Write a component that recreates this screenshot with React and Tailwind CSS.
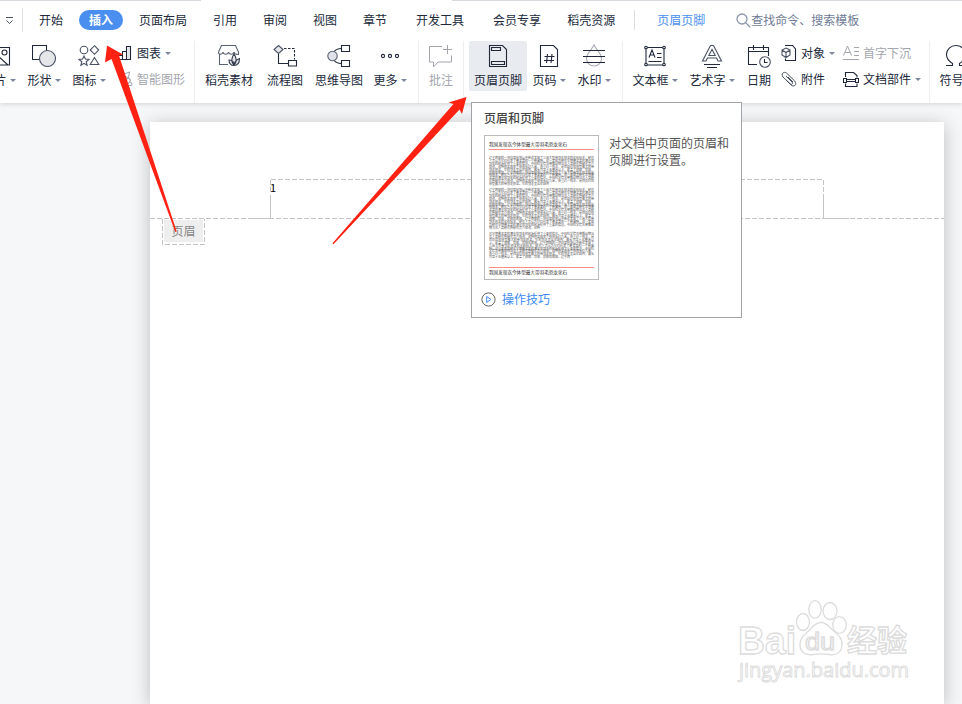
import React from 'react';

const article =
  '辽宁西部的一块白垩纪地层中新近发现了三具大型带羽毛恐龙的化石标本，研究人员认为它们代表了暴龙类的一个新属种，这一发现为研究早期暴龙类的演化和羽毛的起源提供了重要的信息。中国科学院古脊椎动物与古人类研究所研究员介绍说，这种恐龙成年个体体长约九米，体重约一吨半，是目前已知体型最大的带羽毛恐龙。它的羽毛呈丝状结构，最长可达十五厘米以上，覆盖了颈部、背部、前肢和尾部。';

const longText = article + article + article;
const p1 = longText.slice(0, 335);
const p2 = longText.slice(0, 472);
const p3 = longText.slice(60, 365);

function Icon({ w = 24, h = 24, children }) {
  return (
    <svg width={w} height={h} viewBox={`0 0 ${w} ${h}`} fill="none" stroke="currentColor" strokeWidth="1.1" className="shrink-0">
      {children}
    </svg>
  );
}

function Arrow() {
  return <span className="h-0 w-0 border-x-[3px] border-t-[3px] border-x-transparent border-t-[#7d87a0]" />;
}

function Divider({ className }) {
  return <div className={`h-[62px] w-px shrink-0 bg-[#eeeff1] ${className}`} />;
}

function BigButton({ label, arrow, className, children }) {
  return (
    <div className={`flex h-[50px] shrink-0 flex-col items-center pt-[3px] ${className}`}>
      {children}
      <div className="mt-[3px] flex h-[18px] items-center gap-[3px]">
        <span>{label}</span>
        {arrow && <Arrow />}
      </div>
    </div>
  );
}

function SmallButton({ label, arrow, className = '', children }) {
  return (
    <div className={`flex h-[18px] items-center gap-1 ${className}`}>
      {children}
      <span>{label}</span>
      {arrow && <Arrow />}
    </div>
  );
}

function Tabs() {
  return (
    <div className="flex h-10 items-center whitespace-nowrap">
      <svg width="9" height="9" viewBox="0 0 9 9" fill="none" stroke="#4a5265" className="ml-[5px] shrink-0">
        <path d="M1 1.500h7M1.500 4.500l3 3 3-3" />
      </svg>
      <div className="ml-2 h-6 w-px bg-[#dcdfe6]" />
      <span className="ml-4">开始</span>
      <span className="ml-4 flex h-5 w-11 items-center justify-center rounded-full bg-[#4a8ff0] font-bold text-white">插入</span>
      <span className="ml-4">页面布局</span>
      <span className="ml-[26px]">引用</span>
      <span className="ml-[26px]">审阅</span>
      <span className="ml-[26px]">视图</span>
      <span className="ml-[26px]">章节</span>
      <span className="ml-[29px]">开发工具</span>
      <span className="ml-[29px]">会员专享</span>
      <span className="ml-[26px]">稻壳资源</span>
      <div className="ml-[19px] h-5 w-px bg-[#dcdfe6]" />
      <span className="ml-[22px] text-[#4a8ff0]">页眉页脚</span>
      <svg width="15" height="15" viewBox="0 0 15 15" fill="none" stroke="#8d97ad" strokeWidth="1.300" className="ml-[31px] shrink-0">
        <circle cx="6" cy="6" r="5" />
        <path d="M9.600 9.600l4.600 4.600" />
      </svg>
      <span className="text-[#6f7b95]">查找命令、搜索模板</span>
    </div>
  );
}

function Ribbon() {
  return (
    <div className="flex h-[63px] items-start whitespace-nowrap pt-px">
      <BigButton label="图片" arrow className="-ml-[17px] w-8">
        <Icon>
          <path d="M2.500 3.500h20v17.500h-20M8 13l3-1 10 9" />
          <circle cx="17.500" cy="8.500" r="2.500" />
        </Icon>
      </BigButton>
      <BigButton label="形状" arrow className="ml-[13px] w-8">
        <Icon>
          <path d="M.5 1.500h14v14H.5z" />
          <circle cx="15.500" cy="14.500" r="8" fill="#e4e6ea" stroke="#4a5265" />
        </Icon>
      </BigButton>
      <BigButton label="图标" arrow className="ml-[13px] w-8">
        <Icon>
          <g stroke="#4a5265">
            <circle cx="7" cy="6" r="3.800" />
            <path d="M17.500 1.700L21.700 6l-4.200 4.300L13.200 6zM17.500 13.500l4.300 7h-8.600zM7 12l1.400 3.100 3.600.3-2.800 2.300.9 3.600L7 19.300l-3.100 2 .9-3.600-2.800-2.300 3.600-.3z" />
          </g>
        </Icon>
      </BigButton>
      <div className="ml-[13px] flex w-[67px] shrink-0 flex-col gap-2 pt-[3px]">
        <SmallButton label="图表" arrow>
          <Icon w={15} h={16}>
            <path d="M9.500 2h3v12h-3z" fill="#e4e6ea" stroke="none" />
            <path d="M.5 10.500h4v4h-4zM4.500 6.500h4v8h-4zM8.500 1.500h4v13h-4z" />
          </Icon>
        </SmallButton>
        <SmallButton label="智能图形" className="text-[#a3a6ae]">
          <Icon w={15} h={16}>
            <path d="M2 4.500l9.500-3.500-1 5.500zM5 14.500h8.500c1-1.500 0-3-1.500-3.500M10.500 7l2 2-2 3.500H7L5.500 10z" />
          </Icon>
        </SmallButton>
      </div>
      <Divider className="ml-[9px]" />
      <BigButton label="稻壳素材" className="ml-[10px] w-12">
        <Icon>
          <g stroke="#5b6272">
            <path d="M11 20.500H2.500V10M1.500 8l3-6.500h14l3 6.500v3M1.500 8c0 3 4 3 4.500 0 .5 3 5 3 5.500 0 .5 3 5 3 5.500 0 .5 2 2 3 4.500 2" />
            <path d="M17 21c-3-3-3-6.500 0-11 3 4.500 3 8 0 11zM17 21.500c-3 0-5-2-5-5.500 3 0 5 2 5 5.500zM17 21.500c3.500 0 5.500-2 5.500-7-3.500 1.500-5.500 3.500-5.500 7z" fill="#e4e6ea" stroke="#343b4c" />
          </g>
        </Icon>
      </BigButton>
      <BigButton label="流程图" className="ml-[14px] w-9">
        <Icon w={26}>
          <path d="M6.500 1.500l4.500 4-4.500 4-4.500-4z" fill="#e4e6ea" stroke="#4a5265" />
          <path d="M6.500 10v9.500H17M16.500 16.500h8v5.500h-8z" />
          <path d="M12 4.500h10.500v11" strokeDasharray="2.500 1.500" />
        </Icon>
      </BigButton>
      <BigButton label="思维导图" className="ml-3 w-12">
        <Icon>
          <path d="M14.500 1.500h8v6h-8zM14.500 16.500h8v6h-8z" />
          <path d="M14.500 4.500c-4 0-6 1-7.500 3.500M14.500 19.500c-4 0-6-1-7.500-3.500" />
          <circle cx="5.500" cy="12" r="4.700" fill="#dfe2e8" stroke="#5b6272" />
        </Icon>
      </BigButton>
      <BigButton label="更多" arrow className="ml-[11px] w-8">
        <Icon>
          <circle cx="5" cy="12" r="1.600" />
          <circle cx="12" cy="12" r="1.600" />
          <circle cx="19" cy="12" r="1.600" />
        </Icon>
      </BigButton>
      <Divider className="ml-3" />
      <BigButton label="批注" className="ml-[10px] w-6 text-[#a3a6ae]">
        <Icon>
          <path d="M13 2.500H.5v15.500h4V23l4.500-5H22.500v-6.500M18.500 1v9M14 5.500h9" strokeWidth="1" />
        </Icon>
      </BigButton>
      <Divider className="ml-[10px]" />
      <BigButton label="页眉页脚" className="ml-[5px] w-[58px] rounded-xs bg-[#e8ebf0]">
        <Icon>
          <path d="M3.500 1.500h13l4 4V22.500h-17zM5.500 3.500h9v3h-9zM5.500 17.500h13v3h-13z" />
        </Icon>
      </BigButton>
      <BigButton label="页码" arrow className="ml-[6px] w-8">
        <Icon>
          <path d="M3.500 1.500h13l4 4V22.500h-17z" />
          <path d="M10.500 10l-1 9M15 10l-1 9M7.500 12.500h10M7 16.500h10" />
        </Icon>
      </BigButton>
      <BigButton label="水印" arrow className="ml-[13px] w-8">
        <Icon>
          <path d="M12 1c-2 4.500-7.500 8-7.500 13.500a7.500 7.500 0 0015 0C19.500 9 14 5.500 12 1z" stroke="#a9acb4" />
          <path d="M1 6.500h22M1 12.500h22M1 18.500h22" />
        </Icon>
      </BigButton>
      <Divider className="ml-3" />
      <BigButton label="文本框" arrow className="ml-[10px] w-11">
        <Icon>
          <path d="M3 3.500h18v17.500H3zM5.500 17.500h13M14 9.500h4.500M14 13.500h4.500M6 13.500L9 6l3 7.500M7 11h4" />
          <g fill="#fff">
            <circle cx="3" cy="3.500" r="1.300" />
            <circle cx="21" cy="3.500" r="1.300" />
            <circle cx="3" cy="20.500" r="1.300" />
            <circle cx="21" cy="20.500" r="1.300" />
          </g>
        </Icon>
      </BigButton>
      <BigButton label="艺术字" arrow className="ml-[13px] w-11">
        <Icon>
          <path d="M10.500 1.500h3L21.500 17H18l-1.500-3h-9L6 17H2.500zM12 5.500L8.800 11.500h6.400z" stroke="#4a5265" />
          <path d="M4 20.500h16M7 23.500h10" />
        </Icon>
      </BigButton>
      <BigButton label="日期" className="ml-[13px] w-6">
        <Icon>
          <path d="M10 20.500H1.500v-17h20V12M1.500 7.500h20M6.500 1v5M16.500 1v5" />
          <circle cx="18" cy="18" r="5.300" stroke="#4a5265" />
          <path d="M17.500 15v3.500h3" />
        </Icon>
      </BigButton>
      <div className="ml-[10px] flex w-[53px] shrink-0 flex-col gap-2 pt-[3px]">
        <SmallButton label="对象" arrow>
          <Icon w={16} h={16}>
            <path d="M4 .5h7.500l3 3.500v11.500h-10V13.500" />
            <path d="M5 3l4 2v5l-4 2.500L1 10V5zM1 5l4 2.500L9 5M5 7.500v5" stroke="#4a5265" />
          </Icon>
        </SmallButton>
        <SmallButton label="附件">
          <Icon w={16} h={16}>
            <path d="M5 5l6 6c1.500 1.500-.3 3.200-1.800 1.700L2 6C-.5 3 3-.2 5.700 2.200l8 7.800c3 3.500-.7 6.500-3.700 4l-5-5M7 6l5 5" stroke="#4a5265" strokeWidth="1" />
          </Icon>
        </SmallButton>
      </div>
      <div className="ml-[9px] flex w-[77px] shrink-0 flex-col gap-2 pt-[3px]">
        <SmallButton label="首字下沉" className="text-[#a3a6ae]">
          <Icon w={16} h={16}>
            <path d="M.5 10.500L4.500 1l4 9.500M2 7.500h5M11 2.500h5M11 6.500h5M11 10.500h5M0 14.500h16" strokeWidth="1" />
          </Icon>
        </SmallButton>
        <SmallButton label="文档部件" arrow>
          <Icon w={16} h={16}>
            <path d="M2.500 6V1.500h8l3.500 3v2M2.500 12.500v3h11.500v-3" />
            <path d="M.5 7.500h3v4h-3zM12.500 7.500h3v4h-3zM3.500 8.500h9v2h-9z" />
          </Icon>
        </SmallButton>
      </div>
      <Divider className="ml-[9px]" />
      <BigButton label="符号" arrow className="ml-[10px] w-8">
        <Icon>
          <path d="M2 21.500h6.500v-2C4.500 17 2.500 14 2.500 10.500a9.500 9 0 0119 0C21.500 14 19.500 17 15.500 19.500v2H22" />
        </Icon>
      </BigButton>
    </div>
  );
}

function Tooltip() {
  return (
    <div className="absolute left-[471px] top-[102px] flex h-[216px] w-[271px] flex-col border border-[#a0a2a6] bg-white pl-3 pt-[6px] text-[#555]">
      <h3 className="h-[18px] font-medium leading-[18px] text-[#444]">页眉和页脚</h3>
      <div className="mt-2 flex">
        <div className="flex h-[145px] w-[115px] shrink-0 flex-col border border-[#bbb] px-1 pt-[5px] text-[#333]">
          <div className="h-[7px] shrink-0 whitespace-nowrap text-[4.600px] leading-[7px]">我国发现迄今体型最大带羽毛恐龙化石</div>
          <div className="mt-px h-px shrink-0 bg-[#ff8c8c]" />
          <div className="mt-[7px] h-[102px] shrink-0 break-all text-justify text-[3px] leading-[2.900px] text-[#555]">
            <p className="h-[32px]">{p1}</p>
            <p className="h-[44px]">{p2}</p>
            <p className="h-[26px]">{p3}</p>
          </div>
          <div className="mt-[8px] h-px shrink-0 bg-[#ff8c8c]" />
          <div className="h-[8px] shrink-0 whitespace-nowrap text-[4.600px] leading-[8px]">我国发现迄今体型最大带羽毛恐龙化石</div>
        </div>
        <p className="-mt-px ml-[10px] w-[122px] leading-[17px]">对文档中页面的页眉和页脚进行设置。</p>
      </div>
      <div className="-ml-[3px] mt-[10px] flex h-[18px] items-center gap-[6px] text-[#3d8af0]">
        <svg width="15" height="15" viewBox="0 0 15 15" fill="none">
          <circle cx="7.500" cy="7.500" r="6.600" stroke="#666" />
          <path d="M5.700 4.500v6l4.200-3z" stroke="#3d8af0" />
        </svg>
        <span>操作技巧</span>
      </div>
    </div>
  );
}

function HeaderGuides() {
  return (
    <svg width="794" height="130" viewBox="0 0 794 130" fill="none" stroke="#c4c4c4" className="absolute left-0 top-0">
      <path d="M0 96.500h794M121 57.500h553" strokeDasharray="5 2" />
      <path d="M120.500 58v14M673.500 58v14" strokeDasharray="5 2" />
      <path d="M120.500 73v23M673.500 72v24M100 96.500h20M674 96.500h25" />
      <path d="M12.500 97v25.500h42V97" strokeDasharray="5 2" />
    </svg>
  );
}

function Page() {
  return (
    <div className="relative ml-[150px] mt-[19px] h-[582px] w-[794px] bg-white shadow-[0_3px_18px_rgba(0,0,0,0.24)]">
      <HeaderGuides />
      <div className="flex h-[98px] items-start pl-[120px] pt-[57px] text-[11px] leading-4 text-black">1</div>
      <div className="ml-[14px] flex h-[22px] w-[39px] items-center justify-center bg-[#eee] pb-px text-[#888]">页眉</div>
    </div>
  );
}

function Watermark() {
  return (
    <svg width="180" height="90" viewBox="735 598 180 90" className="absolute left-[735px] top-[598px]" fill="#fff" stroke="#dcdcdc" strokeWidth="1.300">
      <text x="738" y="654" fontSize="39" fontWeight="bold" fontFamily="Liberation Sans, sans-serif" textLength="58" lengthAdjust="spacingAndGlyphs">Bai</text>
      <ellipse cx="803" cy="622" rx="6.500" ry="8.500" />
      <ellipse cx="815" cy="609.500" rx="6.200" ry="8.800" />
      <ellipse cx="830" cy="611" rx="7" ry="8.500" />
      <ellipse cx="839.500" cy="625" rx="6.800" ry="8.300" />
      <path d="M821 622.500c6 0 9 5 12 8 5 4 10 8 9 15-1 9-8 10-13 9-6-1-10-1-16 0-6 1-13-1-13-10 0-7 5-10 9-14 3-3 6-8 12-8z" />
      <text x="805" y="649.500" fontSize="23" fontFamily="Liberation Sans, sans-serif" textLength="30" lengthAdjust="spacingAndGlyphs">du</text>
      <text x="847" y="651" fontSize="30" fontWeight="bold" fontFamily="Noto Sans CJK SC, sans-serif">经验</text>
      <text x="739" y="677" fontSize="20" strokeWidth="0.900" fontFamily="Open Sans, sans-serif" textLength="170" lengthAdjust="spacingAndGlyphs">jingyan.baidu.com</text>
    </svg>
  );
}

export default function App() {
  return (
    <div className="relative h-[704px] w-[962px] overflow-hidden bg-[#f5f7f9] font-['Noto_Sans_CJK_SC',sans-serif] text-xs leading-[18px] text-[#20283a]">
      <header className="relative z-10 h-[103px] bg-white shadow-[0_1px_5px_rgba(0,0,0,0.15)]">
        {/* Bottom edge of the document tab strip */}
        <div className="absolute inset-x-0 top-0 flex justify-between">
          <div className="h-px w-[201px] bg-[#d8dae0]" />
          <div className="h-px w-[510px] bg-[#d8dae0]" />
        </div>
        <Tabs />
        <Ribbon />
      </header>
      <Page />
      <div className="absolute inset-0 z-20">
        <Tooltip />
        <Watermark />
        <svg width="962" height="704" viewBox="0 0 962 704" fill="#ff2213" className="absolute inset-0">
          <path d="M107 45.500L105 62.500l6.500-3.500L175.300 232l1.400-.5L119 55.500l4-1z" />
          <path d="M466.500 97L448.500 102.500l5 1.500L332.500 243.300l1 1L459.500 109.500l2.500 4.500z" />
        </svg>
      </div>
    </div>
  );
}
